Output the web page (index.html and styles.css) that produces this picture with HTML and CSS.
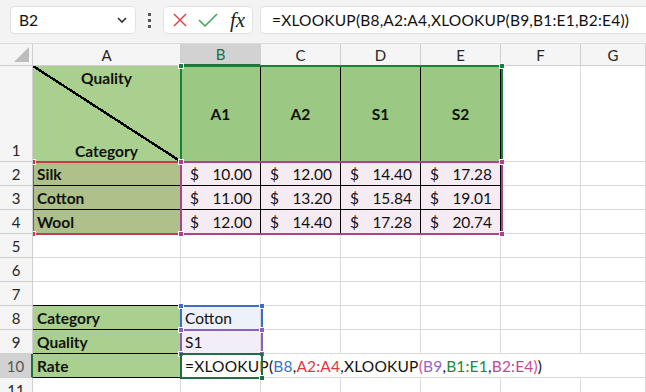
FILE: index.html
```html
<!DOCTYPE html>
<html lang="en">
<head>
  <meta charset="UTF-8">
  <title>XLOOKUP rate table</title>
  <link rel="stylesheet" href="styles.css">
</head>
<body>
  <div class="topbar">
    <div class="namebox">
      <span>B2</span>
      <svg width="12" height="8" viewBox="0 0 12 8"><path d="M2 2 L6 6 L10 2" fill="none" stroke="#333" stroke-width="1.6"/></svg>
    </div>
    <div class="dots"><i></i><i></i><i></i></div>
    <div class="fbtns">
      <svg width="16" height="16" viewBox="0 0 16 16"><path d="M2 2 L14 14 M14 2 L2 14" stroke="#e0464c" stroke-width="1.5"/></svg>
      <svg width="20" height="16" viewBox="0 0 20 16"><path d="M1 8 L7 14 L19 2" fill="none" stroke="#3fa455" stroke-width="1.5"/></svg>
      <span class="fx">fx</span>
    </div>
    <div class="fbox">=XLOOKUP(B8,A2:A4,XLOOKUP(B9,B1:E1,B2:E4))</div>
  </div>

  <div class="sheet">
    <!-- column headers -->
    <div class="hd corner"><span class="tri"></span></div>
    <div class="hd">A</div>
    <div class="hd sel-col">B</div>
    <div class="hd">C</div>
    <div class="hd">D</div>
    <div class="hd">E</div>
    <div class="hd">F</div>
    <div class="hd">G</div>

    <!-- row 1 -->
    <div class="rh tall">1</div>
    <div class="c diag"><b>Quality</b><b>Category</b></div>
    <div class="c qh">A1</div>
    <div class="c qh">A2</div>
    <div class="c qh">S1</div>
    <div class="c qh">S2</div>
    <div class="c"></div>
    <div class="c"></div>

    <!-- row 2 -->
    <div class="rh">2</div>
    <div class="c cat">Silk</div>
    <div class="c num"><span>$</span><span>10.00</span></div>
    <div class="c num"><span>$</span><span>12.00</span></div>
    <div class="c num"><span>$</span><span>14.40</span></div>
    <div class="c num"><span>$</span><span>17.28</span></div>
    <div class="c"></div>
    <div class="c"></div>

    <!-- row 3 -->
    <div class="rh">3</div>
    <div class="c cat">Cotton</div>
    <div class="c num"><span>$</span><span>11.00</span></div>
    <div class="c num"><span>$</span><span>13.20</span></div>
    <div class="c num"><span>$</span><span>15.84</span></div>
    <div class="c num"><span>$</span><span>19.01</span></div>
    <div class="c"></div>
    <div class="c"></div>

    <!-- row 4 -->
    <div class="rh">4</div>
    <div class="c cat">Wool</div>
    <div class="c num"><span>$</span><span>12.00</span></div>
    <div class="c num"><span>$</span><span>14.40</span></div>
    <div class="c num"><span>$</span><span>17.28</span></div>
    <div class="c num"><span>$</span><span>20.74</span></div>
    <div class="c"></div>
    <div class="c"></div>

    <!-- rows 5-7 -->
    <div class="rh">5</div>
    <div class="c"></div><div class="c"></div><div class="c"></div><div class="c"></div><div class="c"></div><div class="c"></div><div class="c"></div>
    <div class="rh">6</div>
    <div class="c"></div><div class="c"></div><div class="c"></div><div class="c"></div><div class="c"></div><div class="c"></div><div class="c"></div>
    <div class="rh">7</div>
    <div class="c lbl-top"></div><div class="c"></div><div class="c"></div><div class="c"></div><div class="c"></div><div class="c"></div><div class="c"></div>

    <!-- lookup inputs -->
    <div class="rh">8</div>
    <div class="c lbl">Category</div>
    <div class="c in-cat">Cotton</div>
    <div class="c"></div><div class="c"></div><div class="c"></div><div class="c"></div><div class="c"></div>

    <div class="rh">9</div>
    <div class="c lbl">Quality</div>
    <div class="c in-qual">S1</div>
    <div class="c"></div><div class="c"></div><div class="c"></div><div class="c"></div><div class="c"></div>

    <div class="rh sel-row">10</div>
    <div class="c lbl">Rate</div>
    <div class="c formula">=XLOOKUP(<span class="r1">B8</span>,<span class="r2">A2:A4</span>,XLOOKUP<span class="p2">(</span><span class="r3">B9</span>,<span class="r4">B1:E1</span>,<span class="r5">B2:E4</span><span class="p2">)</span>)</div>
    <div class="c"></div>

    <div class="rh">11</div>
    <div class="c"></div><div class="c"></div><div class="c"></div><div class="c"></div><div class="c"></div><div class="c"></div><div class="c"></div>

    <!-- range highlights drawn over the grid -->
    <div class="hl hl-green" style="left:180px;top:21px;width:323px;height:98px"><i class="tl"></i><i class="tr"></i></div>
    <div class="hl hl-red" style="left:32px;top:117px;width:150px;height:74px"><i class="tl"></i><i class="bl"></i></div>
    <div class="hl hl-mag" style="left:180px;top:117px;width:323px;height:74px"><i class="tl"></i><i class="tr"></i><i class="bl"></i><i class="br"></i></div>
    <div class="hl hl-blue" style="left:180px;top:261px;width:83px;height:26px"><i class="tl"></i><i class="tr"></i><i class="bl"></i><i class="br"></i></div>
    <div class="hl hl-purple" style="left:180px;top:285px;width:83px;height:26px"><i class="tl"></i><i class="tr"></i><i class="bl"></i><i class="br"></i></div>
    <div class="hl active" style="left:180px;top:309px;width:83px;height:26px"><i class="br"></i></div>
  </div>
</body>
</html>
```

FILE: styles.css
```css
body {
  margin: 0;
  width: 646px;
  height: 392px;
  overflow: hidden;
  font-family: Lato, "Liberation Sans", sans-serif;
  font-size: 15.5px;
  color: #111;
  background: #fff;
}

/* formula bar */
.topbar {
  height: 44px;
  background: #f3f3f3;
  display: flex;
  align-items: flex-start;
  padding: 6px 0 0 10px;
  box-sizing: border-box;
  border-bottom: 1px solid #dcdcdc;
}

.namebox {
  width: 126px;
  height: 28px;
  box-sizing: border-box;
  background: #fff;
  border: 1px solid #e2e2e2;
  border-radius: 5px;
  display: flex;
  align-items: center;
  justify-content: space-between;
  padding: 0 7px 0 8px;
}

.dots {
  width: 27px;
  height: 28px;
  display: flex;
  flex-direction: column;
  align-items: center;
  justify-content: center;
  gap: 3px;
}

.dots i {
  width: 3px;
  height: 3px;
  background: #555;
}

.fbtns {
  width: 90px;
  height: 28px;
  box-sizing: border-box;
  background: #fff;
  border: 1px solid #e2e2e2;
  border-radius: 5px;
  display: flex;
  align-items: center;
  padding-left: 8px;
  gap: 10px;
}

.fx {
  font-family: "Liberation Serif", serif;
  font-style: italic;
  font-size: 21px;
  line-height: 1;
  color: #222;
  margin-left: 2px;
}

.fbox {
  margin-left: 7px;
  flex: 1;
  height: 28px;
  box-sizing: border-box;
  background: #fff;
  border: 1px solid #e2e2e2;
  border-right: none;
  border-radius: 5px 0 0 5px;
  padding-left: 11px;
  line-height: 26px;
  white-space: nowrap;
  letter-spacing: 0.2px;
}

/* sheet grid */
.sheet {
  position: relative;
  display: grid;
  grid-template-columns: 33px 148px repeat(5, 80px) 65px;
  grid-template-rows: 22px 96px repeat(10, 24px);
}

.hd, .rh {
  background: #f5f5f5;
  color: #262626;
  font-size: 15px;
  box-sizing: border-box;
  border-right: 1px solid #cfcfcf;
  border-bottom: 1px solid #cfcfcf;
  display: flex;
  align-items: center;
  justify-content: center;
}

.rh {
  position: relative;
  z-index: 3;
}

.rh.tall {
  align-items: flex-end;
  padding-bottom: 2px;
}

.corner {
  position: relative;
  z-index: 3;
}

.tri {
  position: absolute;
  right: 3px;
  bottom: 3px;
  border-left: 15px solid transparent;
  border-bottom: 15px solid #bdbdbd;
}

.sel-col {
  background: #d2d2d2;
  color: #1e6e42;
  border-bottom: 2px solid #1e6e42;
}

.sel-row {
  background: #d2d2d2;
  color: #555;
  border-right: 2px solid #1e6e42;
}

.c {
  box-sizing: border-box;
  border-right: 1px solid #dadada;
  border-bottom: 1px solid #dadada;
  display: flex;
  align-items: center;
  padding: 0 4px;
  white-space: nowrap;
}

.diag {
  flex-direction: column;
  justify-content: space-between;
  align-items: center;
  padding: 3px 0 1px;
  background:
    linear-gradient(to top right, transparent calc(50% - 1.2px), #000 calc(50% - 1.2px), #000 calc(50% + 1.2px), transparent calc(50% + 1.2px)),
    #a9d08e;
}

.qh {
  background: #9bc882;
  font-weight: bold;
  justify-content: center;
  border-right-color: #000;
}

.cat {
  background: #aec18b;
  font-weight: bold;
  border-bottom-color: #000;
}

.num {
  background: #f6ebf3;
  justify-content: space-between;
  padding: 0 8px 0 9px;
  border-right-color: #000;
  border-bottom-color: #000;
}

.lbl-top {
  border-bottom-color: #000;
}

.lbl {
  background: #a9d08e;
  font-weight: bold;
  border-bottom-color: #000;
}

.in-cat { background: #edf1fa; }
.in-qual { background: #f2eef9; }

.formula {
  grid-column: 3 / 8;
  border-right: none;
  letter-spacing: 0.2px;
}

.r1 { color: #3b72cc; }
.r2 { color: #e0373f; }
.r3 { color: #9466c8; }
.r4 { color: #1b8a3c; }
.r5 { color: #c3479a; }
.p2 { color: #d0508a; }

/* range highlights */
.hl {
  position: absolute;
  box-sizing: border-box;
  border: 2px solid;
  z-index: 1;
}

.hl i {
  position: absolute;
  width: 6px;
  height: 6px;
  box-sizing: border-box;
  border: 1px solid #fff;
  background: currentColor;
}

.hl .tl { left: -4px; top: -4px; }
.hl .tr { right: -4px; top: -4px; }
.hl .bl { left: -4px; bottom: -4px; }
.hl .br { right: -4px; bottom: -4px; }

.hl-green { color: #17803a; border-color: #17803a; }
.hl-red { color: #c23c4b; border-color: #c23c4b; }
.hl-mag { color: #ab4386; border-color: #ab4386; z-index: 2; }
.hl-blue { color: #3e6fc6; border-color: #3e6fc6; }
.hl-purple { color: #8a5fc0; border-color: #8a5fc0; z-index: 2; }
.active { color: #1e6e42; border-color: #1e6e42; z-index: 2; }
```
